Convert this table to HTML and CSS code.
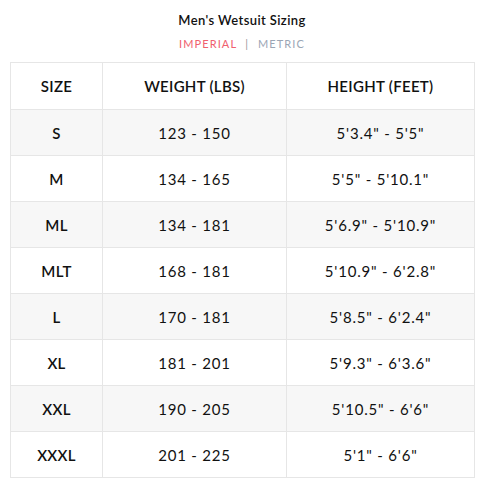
FILE: index.html
```html
<!DOCTYPE html>
<html>
<head>
<meta charset="utf-8">
<link rel="stylesheet" href="styles.css">
</head>
<body>
<div class="wrap">
  <h1 class="title">Men's Wetsuit Sizing</h1>
  <div class="units"><span class="imperial">IMPERIAL</span><span class="sep">|</span><span class="metric">METRIC</span></div>
  <table class="sizes">
    <colgroup><col class="c1"><col class="c2"><col class="c3"></colgroup>
    <thead>
      <tr><th>SIZE</th><th>WEIGHT (LBS)</th><th>HEIGHT (FEET)</th></tr>
    </thead>
    <tbody>
      <tr><td class="sz">S</td><td>123 - 150</td><td>5'3.4" - 5'5"</td></tr>
      <tr><td class="sz">M</td><td>134 - 165</td><td>5'5" - 5'10.1"</td></tr>
      <tr><td class="sz">ML</td><td>134 - 181</td><td>5'6.9" - 5'10.9"</td></tr>
      <tr><td class="sz">MLT</td><td>168 - 181</td><td>5'10.9" - 6'2.8"</td></tr>
      <tr><td class="sz">L</td><td>170 - 181</td><td>5'8.5" - 6'2.4"</td></tr>
      <tr><td class="sz">XL</td><td>181 - 201</td><td>5'9.3" - 6'3.6"</td></tr>
      <tr><td class="sz">XXL</td><td>190 - 205</td><td>5'10.5" - 6'6"</td></tr>
      <tr><td class="sz">XXXL</td><td>201 - 225</td><td>5'1" - 6'6"</td></tr>
    </tbody>
  </table>
</div>
</body>
</html>
```
FILE: styles.css
```css
html, body {
  margin: 0;
  padding: 0;
  background: #ffffff;
}
body {
  font-family: "Futura", "Lato", "DejaVu Sans", sans-serif;
  color: #111;
}
.wrap {
  padding: 12px 11px 0 10px;
}
.title {
  margin: 0;
  text-align: center;
  font-size: 13px;
  font-weight: 600;
  line-height: 16px;
  letter-spacing: 0.4px;
}
.units {
  margin-top: 9px;
  text-align: center;
  font-size: 11px;
  line-height: 13px;
  letter-spacing: 1.1px;
}
.imperial { color: #f0606e; }
.sep { color: #999; margin: 0 9px 0 8px; }
.metric { color: #9ba6b5; }
.sizes {
  margin-top: 12px;
  width: 464px;
  border-collapse: collapse;
  table-layout: fixed;
}
.c1 { width: 92px; }
.c2 { width: 184px; }
.c3 { width: 188px; }
.sizes th, .sizes td {
  border: 1px solid #e6e6e6;
  text-align: center;
  padding: 0;
  font-size: 15px;
}
.sizes th {
  height: 46px;
  font-weight: 600;
  letter-spacing: 0.3px;
}
.sizes td {
  height: 45px;
  font-weight: 400;
  letter-spacing: 0.8px;
}
.sizes td.sz {
  font-weight: 600;
  letter-spacing: 0.3px;
}
.sizes tbody tr:nth-child(odd) {
  background: #f7f7f7;
}
```
